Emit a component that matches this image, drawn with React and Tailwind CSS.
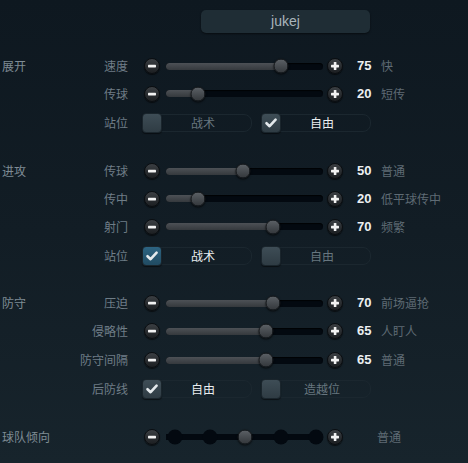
import React from 'react';

const cjk = { fontFamily: '"Noto Sans CJK SC", "Noto Sans", sans-serif' };
const latin = { fontFamily: '"Liberation Sans", Arial, sans-serif' };

function RoundButton({ plus }) {
  return (
    <div className="w-[16px] h-[16px] shrink-0 rounded-full bg-gradient-to-b from-[#3b3f43] to-[#1c1f22] border border-[#0b0e11] shadow-[0_1px_1px_rgba(0,0,0,0.6)] flex items-center justify-center">
      <svg width="10" height="10" viewBox="0 0 10 10">
        <rect x="1" y="3.8" width="8" height="2.6" rx="0.6" fill="#f2f2f2" />
        {plus && <rect x="3.8" y="1" width="2.6" height="8" rx="0.6" fill="#f2f2f2" />}
      </svg>
    </div>
  );
}

function Thumb({ x }) {
  return (
    <div
      className="absolute top-1/2 -translate-y-1/2 -translate-x-1/2 w-[15px] h-[15px] rounded-full bg-gradient-to-b from-[#5b6065] to-[#34383c] border border-[#15181b] shadow-[0_1px_2px_rgba(0,0,0,0.7)]"
      style={{ left: x }}
    />
  );
}

function SliderRow({ label, thumb, value, desc, h }) {
  return (
    <div className="flex items-center" style={{ height: h }}>
      <div className="w-[56px] text-right text-[12px] text-[#6f7d87]" style={cjk}>{label}</div>
      <div className="ml-[16px]"><RoundButton /></div>
      <div className="ml-[6px] relative w-[157px] h-[7px] rounded-full bg-[#030910] shadow-[inset_0_1px_1px_rgba(0,0,0,0.8)]">
        <div className="absolute left-0 top-0 h-full rounded-full bg-gradient-to-b from-[#4d5156] to-[#35393d]" style={{ width: thumb }} />
        <Thumb x={thumb} />
      </div>
      <div className="ml-[4px]"><RoundButton plus /></div>
      <div className="ml-[14px] w-[16px] text-[13px] font-bold text-[#eceff1]" style={latin}>{value}</div>
      <div className="ml-[8px] text-[12px] text-[#5f6b74]" style={cjk}>{desc}</div>
    </div>
  );
}

function Check() {
  return (
    <svg width="14" height="14" viewBox="0 0 14 14">
      <path d="M2.5 7.2 L5.6 10.2 L11.6 3.6" fill="none" stroke="#e4e9ec" strokeWidth="2.6" strokeLinecap="round" strokeLinejoin="round" />
    </svg>
  );
}

function Choice({ text, checked, blue }) {
  const boxBg = blue
    ? 'bg-gradient-to-b from-[#2d6482] to-[#214b62]'
    : 'bg-gradient-to-b from-[#3e4d56] to-[#2f3c44]';
  return (
    <div className="relative w-[110px] h-[20px] flex items-center">
      <div className="absolute left-0 right-0 top-[1px] bottom-[1px] rounded-[8px] border border-[#1b272f]" />
      <div className={`relative w-[20px] h-[20px] rounded-[4px] ${boxBg} border border-[#1a252c] shadow-[0_1px_1px_rgba(0,0,0,0.5)] flex items-center justify-center`}>
        {checked && <Check />}
      </div>
      <div
        className={`relative flex-1 pr-[8px] text-center text-[12px] ${checked ? 'text-[#eaeef0]' : 'text-[#67767f]'}`}
        style={cjk}
      >
        {text}
      </div>
    </div>
  );
}

function ChoiceRow({ label, a, b, checkedA, blue, h }) {
  return (
    <div className="flex items-center" style={{ height: h }}>
      <div className="w-[56px] text-right text-[12px] text-[#6f7d87]" style={cjk}>{label}</div>
      <div className="ml-[14px] flex gap-[9px]">
        <Choice text={a} checked={checkedA} blue={blue} />
        <Choice text={b} checked={!checkedA} />
      </div>
    </div>
  );
}

function Section({ title, firstH, children, className = '' }) {
  return (
    <div className={`flex ${className}`}>
      <div className="w-[72px] shrink-0 pl-[2px] flex items-center text-[12px] text-[#7f8c95]" style={{ ...cjk, height: firstH }}>
        {title}
      </div>
      <div className="flex flex-col">{children}</div>
    </div>
  );
}

export default function App() {
  const dots = [8.5, 44, 114.5, 150];
  return (
    <div className="w-[468px] h-[463px] overflow-hidden bg-gradient-to-b from-[#0e1820] via-[#121d25] to-[#17242c]">
      <div className="pt-[10px] flex">
        <div className="ml-[201px] w-[169px] h-[23px] rounded-[5px] bg-[#1f2d35] shadow-[0_1px_2px_rgba(0,0,0,0.5)] flex items-center justify-center text-[14px] text-[#a9b5bc]" style={latin}>
          jukej
        </div>
      </div>

      <Section title="展开" firstH={28} className="mt-[19px]">
        <SliderRow label="速度" thumb={115} value="75" desc="快" h={28} />
        <SliderRow label="传球" thumb={32} value="20" desc="短传" h={27} />
        <ChoiceRow label="站位" a="战术" b="自由" checkedA={false} h={32} />
      </Section>

      <Section title="进攻" firstH={28} className="mt-[18px]">
        <SliderRow label="传球" thumb={77} value="50" desc="普通" h={28} />
        <SliderRow label="传中" thumb={32} value="20" desc="低平球传中" h={27} />
        <SliderRow label="射门" thumb={107} value="70" desc="频繁" h={29} />
        <ChoiceRow label="站位" a="战术" b="自由" checkedA blue h={30} />
      </Section>

      <Section title="防守" firstH={28} className="mt-[18px]">
        <SliderRow label="压迫" thumb={107} value="70" desc="前场逼抢" h={28} />
        <SliderRow label="侵略性" thumb={100} value="65" desc="人盯人" h={28} />
        <SliderRow label="防守间隔" thumb={100} value="65" desc="普通" h={30} />
        <ChoiceRow label="后防线" a="自由" b="造越位" checkedA h={28} />
      </Section>

      <Section title="球队倾向" firstH={28} className="mt-[20px]">
        <div className="flex items-center h-[28px]">
          <div className="w-[56px]" />
          <div className="ml-[16px]"><RoundButton /></div>
          <div className="ml-[6px] relative w-[157px] h-[6px] bg-[#030910]">
            {dots.map((x) => (
              <div
                key={x}
                className="absolute top-1/2 -translate-y-1/2 -translate-x-1/2 w-[15px] h-[15px] rounded-full bg-[#030910]"
                style={{ left: x }}
              />
            ))}
            <Thumb x={79} />
          </div>
          <div className="ml-[4px]"><RoundButton plus /></div>
          <div className="ml-[34px] text-[12px] text-[#5f6b74]" style={cjk}>普通</div>
        </div>
      </Section>
    </div>
  );
}
